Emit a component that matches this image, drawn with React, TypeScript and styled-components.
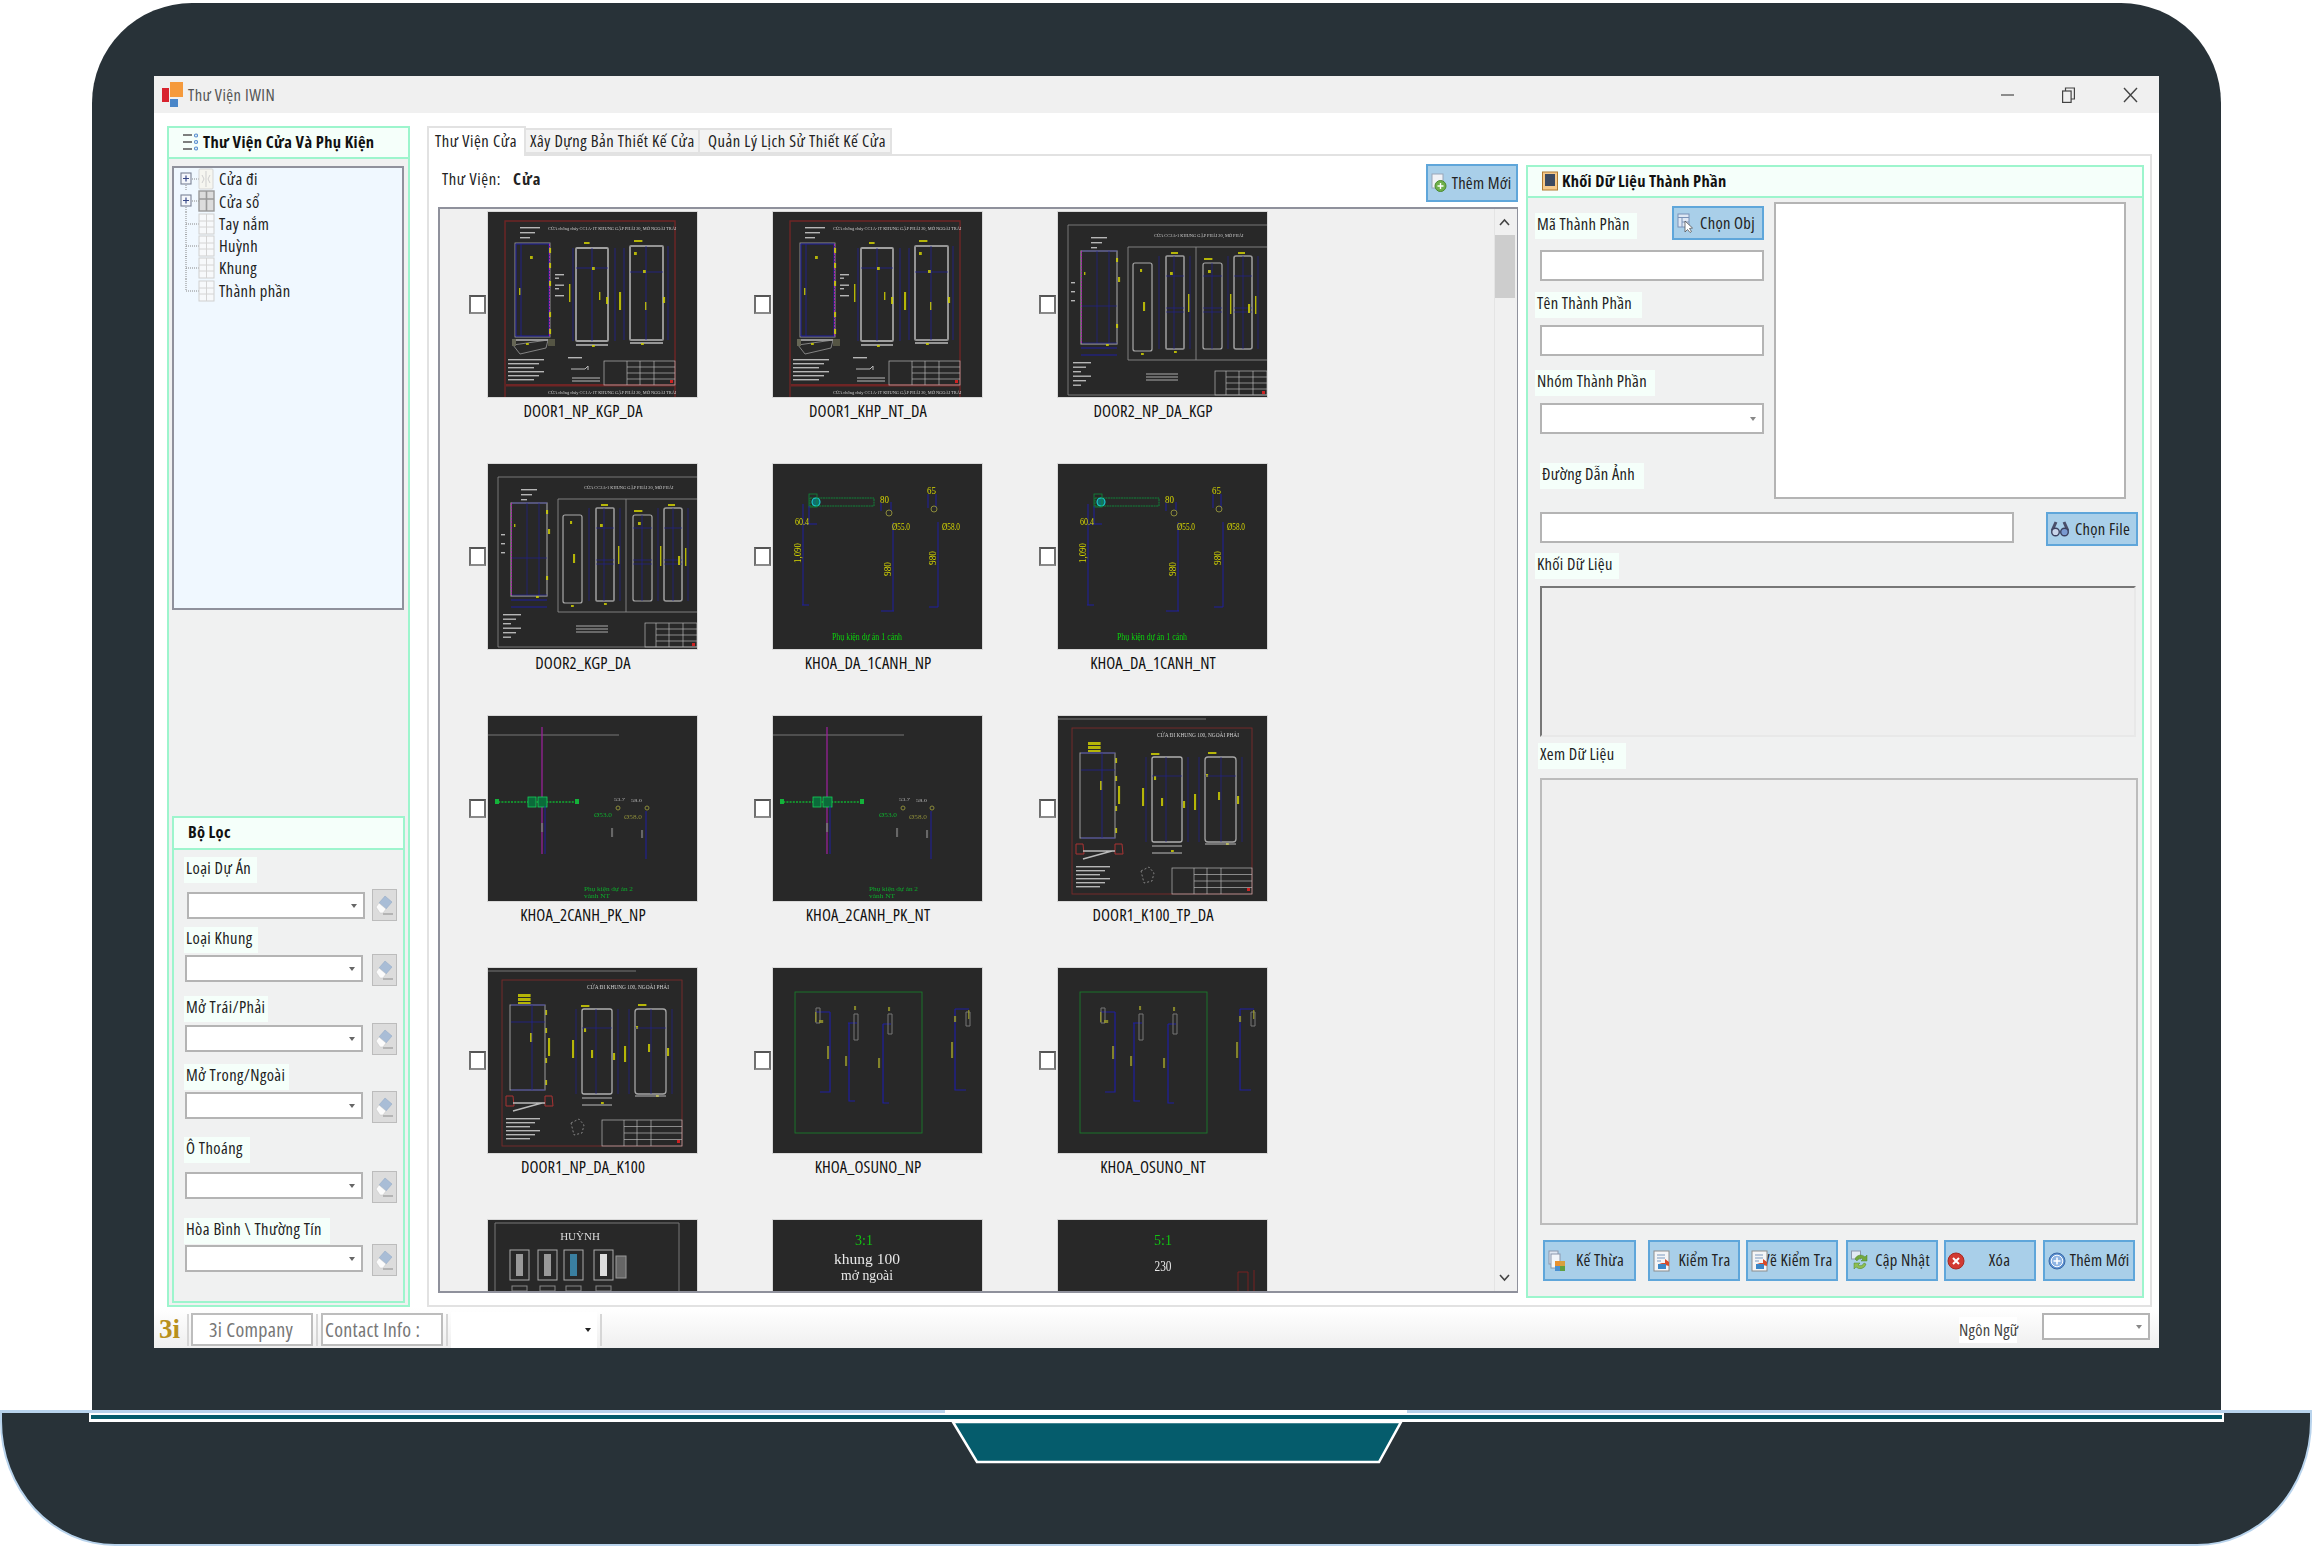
import React from "react";
import styled, { createGlobalStyle } from "styled-components";

const Global = createGlobalStyle`
  html, body { margin: 0; padding: 0; background: #fff; }
  body { font-family: "Open Sans", "Noto Sans", "Liberation Sans", sans-serif; color: #222; }
  * { box-sizing: border-box; }
  svg { flex: none; }
`;

const Page = styled.div`
  width: 2312px;
  height: 1547px;
  padding-top: 3px;
  overflow: hidden;
  background: #fff;
`;
const Lid = styled.div`
  margin-left: 92px;
  width: 2129px;
  height: 1407px;
  padding: 73px 62px 0;
  background: #283238;
  border-radius: 100px 100px 0 0;
`;
const Base = styled.div`
  position: relative;
  height: 136px;
  background: #283238;
  border: 2px solid #b8d3ec;
  border-top-width: 3px;
  border-radius: 0 0 115px 115px / 0 0 125px 125px;
  &::before {
    content: "";
    position: absolute;
    top: -3px;
    left: 943px;
    width: 462px;
    height: 3px;
    background: #fff;
  }
`;
const Strip = styled.div`
  margin-left: 87px;
  width: 2135px;
  height: 9px;
  background: #055c6c;
  border: 2px solid #fff;
  border-bottom-width: 3px;
`;
const Notch = styled.svg`
  display: block;
  margin-left: 949px;
`;

const Window = styled.div`
  width: 2005px;
  height: 1272px;
  display: flex;
  flex-direction: column;
  background: #fff;
`;
const TitleBar = styled.div`
  height: 37px;
  flex: none;
  display: flex;
  align-items: center;
  padding-left: 8px;
  background: #f0f0f0;
`;
const AppIcon = styled.svg`
  flex: none;
  margin-right: 5px;
`;
const WinButtons = styled.div`
  margin-left: auto;
  display: flex;
  align-items: center;
  gap: 48px;
  padding-right: 21px;
`;
const T = styled.span<{ $s?: number; $l?: number; $c?: string; $w?: number }>`
  display: inline-block;
  white-space: nowrap;
  font-size: ${(p) => p.$s ?? 16.5}px;
  font-weight: ${(p) => p.$w ?? 400};
  color: ${(p) => p.$c ?? "#222"};
  line-height: 1.2;
  font-stretch: 75%;
  letter-spacing: ${(p) => p.$l ?? 0}px;
`;
const Main = styled.div`
  flex: none;
  height: 1195px;
  display: flex;
  padding: 13px 0 0 13px;
  gap: 17px;
`;

/* left column */
const LeftPanel = styled.div`
  width: 243px;
  height: 1181px;
  display: flex;
  flex-direction: column;
  background: #f0f1f1;
  border: 2px solid #9df5cd;
`;
const PanelHead = styled.div<{ $h?: number; $pl?: number; $gap?: number }>`
  flex: none;
  height: ${(p) => p.$h ?? 31}px;
  display: flex;
  align-items: center;
  gap: ${(p) => p.$gap ?? 5}px;
  padding-left: ${(p) => p.$pl ?? 14}px;
  padding-bottom: 2px;
  background: #f5fffa;
  border-bottom: 2px solid #9df5cd;
`;
const TreeBox = styled.div`
  flex: none;
  margin: 7px 4px 0 3px;
  width: 232px;
  height: 444px;
  padding: 0 0 0 6px;
  background: #f0f8ff;
  border: 2px solid #8f919c;
`;
const TreeRow = styled.div`
  height: 22.3px;
  display: flex;
  align-items: center;
  gap: 1px;
`;
const FilterPanel = styled.div`
  margin: auto 3px 2px 3px;
  width: 233px;
  height: 487px;
  display: flex;
  flex-direction: column;
  background: #f0f1f1;
  border: 2px solid #9df5cd;
`;
const FilterBody = styled.div`
  padding: 7px 0 0 10px;
`;
const FieldLabel = styled.div<{ $w: number; $mt?: number; $ml?: number; $bg?: string }>`
  width: ${(p) => p.$w}px;
  height: 26px;
  margin-top: ${(p) => p.$mt ?? 0}px;
  margin-left: ${(p) => p.$ml ?? 0}px;
  padding: 0 0 5px 2px;
  display: flex;
  align-items: center;
  background: ${(p) => p.$bg ?? "#f5fffa"};
`;
const FilterRow = styled.div<{ $mt: number; $pl: number; $gap: number }>`
  margin-top: ${(p) => p.$mt}px;
  padding-left: ${(p) => p.$pl}px;
  display: flex;
  align-items: flex-start;
  gap: ${(p) => p.$gap}px;
`;
const Field = styled.div<{ $w: number; $h: number; $mt?: number; $ml?: number }>`
  flex: none;
  position: relative;
  width: ${(p) => p.$w}px;
  height: ${(p) => p.$h}px;
  margin-top: ${(p) => p.$mt ?? 0}px;
  margin-left: ${(p) => p.$ml ?? 0}px;
  background: #fff;
  border: 2px solid #b4b4b4;
`;
const Arrow = styled.i<{ $c?: string }>`
  position: absolute;
  right: 6px;
  top: 50%;
  margin-top: -2px;
  border-left: 3.5px solid transparent;
  border-right: 3.5px solid transparent;
  border-top: 4px solid ${(p) => p.$c ?? "#666"};
`;
const ClearBtn = styled.div`
  flex: none;
  width: 25px;
  height: 32px;
  display: flex;
  align-items: center;
  justify-content: center;
  background: #dcdcdc;
  border: 1px solid #bcbcbc;
`;

/* center pane */
const Pane = styled.div`
  width: 1725px;
  height: 1181px;
  display: flex;
  flex-direction: column;
`;
const TabStrip = styled.div`
  flex: none;
  height: 28px;
  display: flex;
  align-items: flex-end;
`;
const Tab = styled.div<{ $w: number; $on?: boolean; $pl?: number }>`
  width: ${(p) => p.$w}px;
  height: ${(p) => (p.$on ? 30 : 26)}px;
  margin-bottom: ${(p) => (p.$on ? -2 : 0)}px;
  display: flex;
  align-items: center;
  padding-left: ${(p) => p.$pl ?? 4}px;
  padding-bottom: ${(p) => (p.$on ? 3 : 0)}px;
  background: ${(p) => (p.$on ? "#fff" : "#f3f3f3")};
  border: 2px solid #e2e2e2;
  border-bottom: ${(p) => (p.$on ? "none" : "2px solid #e2e2e2")};
  border-left-width: ${(p) => (p.$on ? 2 : 0)}px;
  position: relative;
  z-index: ${(p) => (p.$on ? 1 : 0)};
`;
const PaneBody = styled.div`
  flex: 1;
  display: flex;
  gap: 8px;
  padding: 8px 0 0 9px;
  border: 2px solid #e2e2e2;
  background: #fff;
`;
const LibCol = styled.div`
  flex: none;
  width: 1080px;
  display: flex;
  flex-direction: column;
`;
const LibBar = styled.div`
  height: 38px;
  flex: none;
  display: flex;
  align-items: center;
  padding-left: 4px;
`;
const LibName = styled.div<{ $w: number }>`
  flex: none;
  width: ${(p) => p.$w}px;
  margin-bottom: 8px;
`;
const Blue = styled.div<{ $w: number; $h: number; $ml?: number; $pl?: number }>`
  flex: none;
  width: ${(p) => p.$w}px;
  height: ${(p) => p.$h}px;
  margin-left: ${(p) => (p.$ml === undefined ? 0 : p.$ml)}px;
  padding-left: ${(p) => p.$pl ?? 3}px;
  display: flex;
  align-items: center;
  overflow: hidden;
  background: #a9cfe9;
  border: 2px solid #5fa6da;
`;
const BtnIcon = styled.svg`
  flex: none;
  position: relative;
  z-index: 1;
`;
const BtnText = styled.div<{ $shift?: number }>`
  flex: 1;
  min-width: 0;
  display: flex;
  justify-content: center;
  margin-left: ${(p) => p.$shift ?? 0}px;
  padding-bottom: 1px;
`;
const TopAdd = styled(Blue)`
  margin-left: auto;
`;
const Gallery = styled.div`
  margin-top: 5px;
  height: 1086px;
  display: flex;
  background: #f0f0f0;
  border: 2px solid #8f919c;
  border-right-width: 1px;
  overflow: hidden;
`;
const GalleryGrid = styled.div`
  flex: 1;
  display: grid;
  grid-template-columns: repeat(3, 285px);
  grid-auto-rows: 252px;
  padding: 3px 0 0 29px;
  overflow: hidden;
`;
const Cell = styled.div`
  display: grid;
  grid-template-columns: 17px 209px;
  grid-template-rows: 185px auto;
  column-gap: 2px;
  align-content: start;
`;
const Check = styled.div`
  align-self: center;
  width: 17px;
  height: 19px;
  background: #fff;
  border: 2px solid #6f6f6f;
  border-top-color: #555;
  border-bottom-color: #8a8a8a;
`;
const Thumb = styled.svg`
  display: block;
  width: 209px;
  height: 185px;
  background: #282828;
  outline: 1px solid #d8d8d8;
  filter: blur(0.35px);
`;
const Caption = styled.div`
  grid-column: 2;
  width: 190px;
  height: 28px;
  display: flex;
  justify-content: center;
  align-items: center;
`;
const Scroll = styled.div`
  flex: none;
  width: 23px;
  display: flex;
  flex-direction: column;
  align-items: flex-start;
  border-left: 1px solid #e4e4e4;
  background: #f0f0f0;
`;
const ScrollBtn = styled.svg`
  flex: none;
  margin: 9px 0 9px 4px;
`;
const ScrollThumb = styled.div`
  flex: none;
  width: 20px;
  height: 63px;
  background: #cdcdcd;
`;
const ScrollFill = styled.div`
  flex: 1;
`;

/* right panel */
const RightPanel = styled.div`
  flex: none;
  width: 618px;
  height: 1133px;
  margin-top: 1px;
  display: flex;
  flex-direction: column;
  background: #f0f1f1;
  border: 2px solid #9df5cd;
`;
const RightBody = styled.div`
  padding: 4px 0 0 7px;
`;
const TopArea = styled.div`
  display: flex;
  gap: 10px;
  align-items: flex-start;
`;
const FormCol = styled.div`
  flex: none;
  width: 229px;
  padding-top: 4px;
`;
const LabelRow = styled.div`
  display: flex;
  align-items: center;
  justify-content: space-between;
`;
const ImageBox = styled.div`
  flex: none;
  width: 352px;
  height: 297px;
  background: #fff;
  border: 2px solid #b4b4b4;
`;
const PathRow = styled.div`
  margin: 13px 0 0 5px;
  display: flex;
  align-items: flex-start;
  gap: 32px;
`;
const Sunken = styled.div<{ $w: number; $h: number; $mt: number; $deep?: boolean }>`
  width: ${(p) => p.$w}px;
  height: ${(p) => p.$h}px;
  margin: ${(p) => p.$mt}px 0 0 5px;
  background: #efefef;
  border: 2px solid ${(p) => (p.$deep ? "#e8e8e8" : "#bcbcbc")};
  border-top-color: ${(p) => (p.$deep ? "#777" : "#bcbcbc")};
  border-left-color: ${(p) => (p.$deep ? "#777" : "#bcbcbc")};
`;
const ActionRow = styled.div`
  margin-top: 15px;
  display: flex;
`;

/* status bar */
const Status = styled.div`
  flex: 1;
  display: flex;
  align-items: center;
  padding: 3px 0 0 5px;
  background: linear-gradient(#fff, #efefef);
`;
const Logo3i = styled.span`
  font-family: "Liberation Serif", serif;
  font-size: 27px;
  font-weight: 700;
  color: #b8901c;
  width: 23px;
  line-height: 1;
`;
const Sep = styled.div<{ $mx?: string }>`
  flex: none;
  width: 2px;
  height: 32px;
  margin: ${(p) => p.$mx ?? "0 3px"};
  background: #d6d6d6;
`;
const StatusBox = styled.div<{ $pl: number }>`
  flex: none;
  width: 122px;
  height: 33px;
  display: flex;
  align-items: center;
  padding-left: ${(p) => p.$pl}px;
  background: #fff;
  border: 2px solid #bdbdbd;
`;
const StatusCombo = styled.div`
  flex: none;
  position: relative;
  width: 146px;
  height: 36px;
  background: #fff;
`;
const LangLabel = styled.div`
  margin-left: auto;
  width: 58px;
  height: 26px;
  display: flex;
  align-items: center;
  background: #fff;
`;
const LangCombo = styled(Field)`
  margin: -6px 9px 0 25px;
`;

/* ---------- drawings ---------- */
const Y = "#d8d800";
const BL = "#1f1fa0";
const GR = "#9a9a9a";
type R = [number, number, number, number];
const Marks = ({ list, c = Y }: { list: R[]; c?: string }) => (
  <>
    {list.map((r, i) => (
      <rect key={i} x={r[0]} y={r[1]} width={r[2] * 0.7} height={r[3]} fill={c} opacity={0.8} />
    ))}
  </>
);
const Lines = ({ x, y, n, w, step = 4, c = "#cfcfcf" }: { x: number; y: number; n: number; w: number; step?: number; c?: string }) => (
  <>
    {Array.from({ length: n }).map((_, i) => (
      <rect key={i} x={x} y={y + i * step} width={w - (i % 3) * 5} height={1.4} fill={c} opacity={0.85} />
    ))}
  </>
);
const SmallText = ({ x, y, w, children, s = 5.4, c = "#cfcfcf", a }: { x: number; y: number; w?: number; children: string; s?: number; c?: string; a?: "middle" }) => (
  <text x={x} y={y} fontSize={s} fill={c} fontFamily="Liberation Serif, serif" textLength={w} lengthAdjust={w ? "spacingAndGlyphs" : undefined} textAnchor={a}>
    {children}
  </text>
);
const TableBox = ({ x, y, w, h, split }: { x: number; y: number; w: number; h: number; split: number }) => (
  <g stroke="#b5b5b5" strokeWidth="0.7" fill="none">
    <rect x={x} y={y} width={w} height={h} />
    <path d={`M${x + split} ${y}V${y + h}M${x + split + 13} ${y}V${y + h}M${x + split + 27} ${y}V${y + h}M${x + split} ${y + h * 0.25}H${x + w}M${x + split} ${y + h * 0.5}H${x + w}M${x + split} ${y + h * 0.75}H${x + w}`} />
  </g>
);
const Door1 = () => (
  <>
    <path d="M17 185V9H187V185" fill="none" stroke="#6f2525" strokeWidth="1.4" />
    <rect x="18" y="172" width="169" height="2.5" fill="#6f2525" />
    <SmallText x={60} y={18} s={4.4}>CỬA chống cháy CC1A-1T KHUNG GẬP PHẢI 20, MỞ NGOÀI TRÁI</SmallText>
    <SmallText x={60} y={182} s={4.4}>CỬA chống cháy CC1A-1T KHUNG GẬP PHẢI 20, MỞ NGOÀI TRÁI</SmallText>
    <Lines x={32} y={15} n={3} w={20} step={5} />
    <rect x="27" y="31" width="35" height="94" fill="none" stroke={GR} strokeWidth="0.9" />
    <rect x="28" y="32" width="33" height="92" fill="none" stroke={BL} strokeWidth="1" />
    <path d="M61.5 32V124" stroke="#b020b0" strokeWidth="1" strokeDasharray="2 1" />
    <path d="M33 32V124" stroke={BL} strokeWidth="0.8" />
    <rect x="88" y="36" width="32" height="93" fill="none" stroke="#a0a0a0" strokeWidth="1.8" rx="1" />
    <path d="M88 56H120M104 36V129M85 36V129M127 36V129" stroke={BL} strokeWidth="0.7" />
    <rect x="142" y="34" width="33" height="94" fill="none" stroke="#949494" strokeWidth="2" rx="1" />
    <path d="M142 60H175M158 34V128M180 34V128M136 36V128" stroke={BL} strokeWidth="0.7" />
    <path d="M88 133H120M142 131H175M27 128H66" stroke="#bbb" strokeWidth="1.3" />
    <path d="M25 133L60 128L58 136L32 142Z" fill="none" stroke="#999" strokeWidth="0.8" />
    <rect x="60" y="127" width="7" height="7" fill="#554" />
    <rect x="24" y="127" width="4" height="7" fill="#665" />
    <Marks list={[[61, 36, 3, 5], [61, 51, 3, 5], [61, 69, 3, 5], [61, 100, 3, 5], [61, 117, 3, 5], [31, 76, 2, 7], [42, 44, 4, 3], [81, 72, 2, 18], [118, 85, 3, 7], [104, 55, 4, 3], [111, 80, 2, 8], [131, 80, 3, 18], [146, 40, 4, 3], [155, 58, 4, 3], [157, 90, 2, 8], [175, 85, 3, 6], [96, 30, 8, 2], [146, 28, 12, 2], [38, 131, 4, 2], [104, 133, 4, 2], [153, 131, 4, 2]]} />
    <Lines x={20} y={147} n={6} w={36} step={4} />
    <Lines x={67} y={62} n={7} w={9} step={3.5} />
    <Lines x={80} y={145} n={1} w={14} />
    <path d="M83 157h14l3 -3v4M84 166h28M84 169h28" stroke="#bbb" strokeWidth="1" fill="none" />
    <TableBox x={116} y={149} w={71} h={24} split={23} />
    <rect x="182" y="168" width="3" height="3" fill="#c22" />
  </>
);
const Door2 = () => (
  <>
    <path d="M209 13H10V183H209" fill="none" stroke="#8a8a8a" strokeWidth="0.8" />
    <SmallText x={96} y={25} s={4.4}>CỬA CC2A-1 KHUNG GẬP PHẢI 20, MỞ PHẢI</SmallText>
    <Lines x={33} y={25} n={3} w={16} step={5} />
    <rect x="23" y="39" width="36" height="93" fill="none" stroke={GR} strokeWidth="1.2" />
    <path d="M24 39H59M24 131H59M39 39V131M24 94H59M51 39V131" stroke={BL} strokeWidth="0.6" />
    <path d="M23.5 39V132" stroke="#b020b0" strokeDasharray="2 1" strokeWidth="0.9" />
    <path d="M23 136H59M23 143H59" stroke={BL} strokeWidth="1" />
    <path d="M70 35H209M70 35V148H209M138 35V148" stroke="#888" strokeWidth="0.9" fill="none" />
    <rect x="75" y="51" width="19" height="88" rx="2" fill="none" stroke="#aaa" strokeWidth="1.2" />
    <rect x="108" y="44" width="18" height="93" rx="1" fill="none" stroke="#9a9a9a" strokeWidth="1.6" />
    <rect x="145" y="51" width="19" height="86" rx="2" fill="none" stroke="#aaa" strokeWidth="1.2" />
    <rect x="176" y="44" width="18" height="93" rx="2" fill="none" stroke="#9a9a9a" strokeWidth="1.6" />
    <path d="M108 64H126M108 96H126M108 100H126M145 64H164M145 96H164M145 100H164M176 64H194M176 96H194M176 100H194M116 44V137M154 51V137M185 44V137M101 44V137M132 44V137M170 44V137M200 44V137" stroke={BL} strokeWidth="0.6" />
    <Marks list={[[58, 46, 3, 4], [60, 65, 3, 5], [58, 112, 3, 4], [26, 60, 2, 3], [85, 90, 3, 9], [82, 57, 3, 3], [112, 60, 4, 3], [130, 82, 2, 18], [150, 58, 4, 3], [172, 82, 2, 20], [190, 92, 3, 9], [197, 84, 2, 18], [48, 132, 4, 2], [83, 141, 4, 2], [116, 139, 4, 2], [113, 40, 10, 2], [146, 46, 12, 2], [180, 40, 10, 2]]} />
    <Lines x={15} y={150} n={6} w={18} step={4.5} />
    <path d="M88 162h32M88 165h32M88 168h32" stroke="#aaa" strokeWidth="1" />
    <Lines x={13} y={70} n={8} w={4} step={3} />
    <TableBox x={157} y={159} w={52} h={24} split={11} />
    <rect x="204" y="179" width="3" height="3" fill="#c22" />
  </>
);
const Khoa1 = () => (
  <>
    <rect x="37" y="34" width="64" height="8" fill="none" stroke="#0e8c3a" strokeWidth="0.9" strokeDasharray="2 0.6" />
    <circle cx="43" cy="38" r="4" fill="#0f6f6f" stroke="#19d6d6" strokeWidth="1.1" />
    <rect x="36" y="30" width="8" height="13" fill="none" stroke="#0e8c3a" strokeWidth="0.8" />
    <path d="M30 40V141M29 141H36M120 58V147M108 147H121M165 58V143M156 143H165M36 42V60M31 60H44M108 38V47M118 38V47M155 30V44M163 30V44" stroke={BL} strokeWidth="1" fill="none" />
    <circle cx="116" cy="49" r="3" fill="none" stroke="#8a8a3a" />
    <circle cx="161" cy="45" r="3" fill="none" stroke="#8a8a3a" />
    <SmallText x={22} y={61} s={11} c={Y} w={14}>60.4</SmallText>
    <SmallText x={107} y={39} s={11} c={Y} w={9}>80</SmallText>
    <SmallText x={154} y={30} s={11} c={Y} w={9}>65</SmallText>
    <SmallText x={119} y={66} s={11} c={Y} w={18}>Ø55.0</SmallText>
    <SmallText x={169} y={66} s={11} c={Y} w={18}>Ø58.0</SmallText>
    <g transform="translate(28 99) rotate(-90)"><SmallText x={0} y={0} s={10} c={Y} w={20}>1,090</SmallText></g>
    <g transform="translate(118 112) rotate(-90)"><SmallText x={0} y={0} s={10} c={Y} w={14}>980</SmallText></g>
    <g transform="translate(163 101) rotate(-90)"><SmallText x={0} y={0} s={10} c={Y} w={14}>980</SmallText></g>
    <SmallText x={59} y={176} s={11} c="#0bd40b" w={70}>Phụ kiện dự án 1 cánh</SmallText>
  </>
);
const Khoa2 = () => (
  <>
    <path d="M0 19H131" stroke="#777" strokeWidth="1.2" />
    <path d="M54 11V138" stroke="#a020a0" strokeWidth="1.2" />
    <path d="M7 86H90" stroke="#0fae2f" strokeWidth="1.3" strokeDasharray="2 1.2" />
    <rect x="40" y="81" width="8" height="10" fill="#0b6b3a" stroke="#14d25a" strokeWidth="0.8" />
    <rect x="50" y="81" width="9" height="10" fill="#0b6b3a" stroke="#14d25a" strokeWidth="0.8" />
    <rect x="7" y="83" width="4" height="5" fill="#14b23a" />
    <rect x="87" y="83" width="4" height="5" fill="#14b23a" />
    <path d="M57 90V138M158 95V143" stroke={BL} strokeWidth="1" />
    <circle cx="130" cy="92" r="2" fill="none" stroke="#8a8a3a" />
    <circle cx="159" cy="92" r="2" fill="none" stroke="#8a8a3a" />
    <SmallText x={126} y={85} s={5} c="#bbb" w={11}>53.7</SmallText>
    <SmallText x={143} y={86} s={5} c="#bbb" w={11}>58.0</SmallText>
    <SmallText x={106} y={101} s={5.5} c="#0fae2f" w={18}>Ø53.0</SmallText>
    <SmallText x={136} y={103} s={5.5} c="#8a8a3a" w={18}>Ø58.0</SmallText>
    <Marks c="#777" list={[[123, 112, 3, 9], [153, 114, 3, 8], [53, 107, 3, 9]]} />
    <SmallText x={96} y={175} s={6} c="#0bae2b" w={49}>Phụ kiện dự án 2</SmallText>
    <SmallText x={96} y={182} s={6} c="#0bae2b" w={26}>vành NT</SmallText>
  </>
);
const DoorK100 = () => (
  <>
    <path d="M0 3H148" stroke="#777" strokeWidth="1" />
    <rect x="14" y="12" width="180" height="166" fill="none" stroke="#7a2a2a" strokeWidth="0.9" />
    <SmallText x={99} y={21} s={6} w={82}>CỬA ĐI KHUNG 100, NGOÀI PHẢI</SmallText>
    <Marks list={[[30, 26, 18, 3], [30, 30, 18, 3], [30, 34, 18, 2], [93, 37, 12, 2], [150, 36, 12, 2], [57, 42, 3, 5], [57, 60, 3, 5], [57, 90, 3, 5], [57, 112, 3, 5], [42, 65, 3, 9], [60, 70, 3, 18], [84, 72, 3, 18], [96, 60, 3, 4], [103, 82, 3, 8], [125, 85, 3, 7], [136, 78, 3, 16], [148, 58, 3, 3], [160, 76, 3, 8], [179, 80, 3, 8], [113, 134, 4, 2], [168, 127, 4, 2]]} />
    <rect x="22" y="37" width="35" height="85" fill="none" stroke={GR} />
    <path d="M23 37H57M23 54H57M44 37V122M23 122H57" stroke={BL} strokeWidth="0.7" />
    <rect x="94" y="41" width="30" height="85" rx="2" fill="none" stroke="#b0b0b0" strokeWidth="1.3" />
    <rect x="147" y="41" width="31" height="85" rx="3" fill="none" stroke="#a5a5a5" strokeWidth="1.3" />
    <path d="M94 60H124M108 41V126M147 60H178M163 41V126M88 41V126M130 41V126M141 41V126M184 41V126" stroke={BL} strokeWidth="0.6" />
    <path d="M94 130H124M147 128H178M94 137H124" stroke="#bbb" strokeWidth="1" />
    <path d="M18 128h7l1 10h-8z" fill="none" stroke="#a33" strokeWidth="1" />
    <path d="M57 128h7l1 10h-8z" fill="none" stroke="#a33" strokeWidth="1" />
    <path d="M25 135H57M25 143L54 135" stroke="#bbb" strokeWidth="1.4" />
    <Lines x={18} y={150} n={6} w={34} step={4} />
    <path d="M83 155l8-4 5 6-2 8-8 2z" stroke="#999" fill="none" strokeDasharray="2 2" strokeWidth="0.8" />
    <TableBox x={114} y={152} w={80} h={26} split={22} />
    <rect x="189" y="172" width="3" height="3" fill="#c22" />
  </>
);
const Osuno = () => (
  <>
    <rect x="22" y="24" width="127" height="141" fill="none" stroke="#1a7a2a" strokeWidth="0.9" />
    <path d="M57 44V124H47M43 44H57M76 55V133H82M75 55H84M110 56V135H116M110 56H118M182 41V122H193M182 41H196" stroke={BL} strokeWidth="1.2" fill="none" />
    <path d="M43 40h4v15h-4zM81 46h4v26h-4zM115 46h4v20h-4zM193 44h4v14h-4z" fill="none" stroke="#777" strokeWidth="1" />
    <Marks c="#9a9a2a" list={[[42, 44, 2, 10], [46, 52, 6, 3], [81, 38, 3, 4], [115, 39, 3, 4], [54, 78, 3, 13], [72, 88, 3, 10], [105, 90, 3, 10], [178, 74, 3, 16], [195, 42, 2, 9], [181, 48, 3, 6]]} />
  </>
);
const Huynh = () => (
  <>
    <path d="M7 71V3H191V71" fill="none" stroke="#777" />
    <SmallText x={92} y={20} s={11} c="#ddd" a="middle">HUỲNH</SmallText>
    {[22, 50, 76, 106].map((x, i) => (
      <g key={x}>
        <rect x={x} y={30} width={19} height={30} fill="none" stroke="#aaa" />
        <rect x={x + 6} y={34} width={7} height={22} fill={i === 3 ? "#ddd" : i === 2 ? "#3a7fa0" : "#999"} />
        <rect x={x + 2} y={66} width={15} height={5} fill="none" stroke="#888" />
      </g>
    ))}
    <rect x="128" y="36" width="10" height="22" fill="#666" stroke="#999" />
  </>
);
const Ratio = ({ t, a, b, x }: { t: string; a: string; b?: string; x: number }) => (
  <>
    <SmallText x={x} y={25} s={14} c="#11c511" a="middle">{t}</SmallText>
    <SmallText x={b ? 94 : 105} y={b ? 44 : 51} s={b ? 15 : 14} c="#e8e8e8" a="middle" w={b ? 66 : 17}>{a}</SmallText>
    {b && <SmallText x={94} y={60} s={15} c="#e8e8e8" a="middle" w={52}>{b}</SmallText>}
    {!b && <path d="M180 71V52H190V71M196 50V71" stroke="#8a2020" fill="none" strokeWidth="0.8" />}
  </>
);

type Item = { caption?: string; art: React.ReactNode };
const items: Item[] = [
  { caption: "DOOR1_NP_KGP_DA", art: <Door1 /> },
  { caption: "DOOR1_KHP_NT_DA", art: <Door1 /> },
  { caption: "DOOR2_NP_DA_KGP", art: <Door2 /> },
  { caption: "DOOR2_KGP_DA", art: <Door2 /> },
  { caption: "KHOA_DA_1CANH_NP", art: <Khoa1 /> },
  { caption: "KHOA_DA_1CANH_NT", art: <Khoa1 /> },
  { caption: "KHOA_2CANH_PK_NP", art: <Khoa2 /> },
  { caption: "KHOA_2CANH_PK_NT", art: <Khoa2 /> },
  { caption: "DOOR1_K100_TP_DA", art: <DoorK100 /> },
  { caption: "DOOR1_NP_DA_K100", art: <DoorK100 /> },
  { caption: "KHOA_OSUNO_NP", art: <Osuno /> },
  { caption: "KHOA_OSUNO_NT", art: <Osuno /> },
  { art: <Huynh /> },
  { art: <Ratio t="3:1" a="khung 100" b="mở ngoài" x={91} /> },
  { art: <Ratio t="5:1" a="230" x={105} /> },
];

/* ---------- icons ---------- */
const Eraser = () => (
  <svg width="19" height="22" viewBox="0 0 19 22">
    <path d="M10 2L17 8L11 15L4 9Z" fill="#a9bdd6" stroke="#8ea6c4" strokeWidth="0.5" />
    <path d="M4 9L11 15L8 19H5L1 13Z" fill="#fbfbfb" stroke="#c4c4c4" strokeWidth="0.5" />
    <path d="M8 20H18" stroke="#9a9a9a" strokeWidth="1.2" />
  </svg>
);
const TreeExp = ({ plus, last, kind }: { plus?: boolean; last?: boolean; kind: "door" | "win" | "grid" }) => (
  <svg width="38" height="22" viewBox="0 0 38 22" style={{ overflow: "visible" }}>
    <path d={`M6 ${plus ? 17 : -1}V${last ? 11 : 23}M${plus ? 12 : 6} 11H19`} stroke="#888" strokeWidth="1" strokeDasharray="1 1" fill="none" />
    {plus && (
      <>
        <rect x="1" y="5" width="10" height="11" fill="#f4f7fb" stroke="#7a8296" strokeWidth="1.1" />
        <path d="M3 10.5H9M6 7.5V13.5" stroke="#3a4a88" strokeWidth="1.2" />
      </>
    )}
    {kind === "door" && (
      <>
        <rect x="19" y="1" width="14" height="20" rx="1" fill="#f6f6f0" stroke="#d5d5d5" />
        <path d="M26 3V19M22 7L24 11L22 15M30 7L28 11L30 15" stroke="#cfcfcf" fill="none" />
      </>
    )}
    {kind === "win" && (
      <>
        <rect x="19" y="1" width="15" height="20" fill="#dcdcdc" stroke="#999" strokeWidth="1.4" />
        <path d="M26.5 1V21M19 9H34" stroke="#999" strokeWidth="1.6" />
      </>
    )}
    {kind === "grid" && (
      <>
        <rect x="19" y="1" width="15" height="20" fill="#f7f9fb" stroke="#cfcfcf" />
        <path d="M26.5 1V21M19 8H34M19 14H34" stroke="#d4d4d4" />
      </>
    )}
  </svg>
);
const HeadMenu = () => (
  <svg width="15" height="18" viewBox="0 0 15 18">
    <path d="M0 2H9M0 9H9M0 16H9" stroke="#555" strokeWidth="1.3" />
    <g fill="none" stroke="#5a8fd0" strokeWidth="1.2"><circle cx="13" cy="2.5" r="1.5" /><circle cx="13" cy="9" r="1.5" /><circle cx="13" cy="15.5" r="1.5" /></g>
  </svg>
);
const DocPlus = () => (
  <BtnIcon width="16" height="20" viewBox="0 0 16 20">
    <rect x="1" y="1" width="11" height="14" fill="#f0f2f6" stroke="#9aa6b8" />
    <circle cx="9.5" cy="13" r="5.5" fill="#6fb04a" stroke="#4a8a30" />
    <path d="M6.5 13H12.5M9.5 10V16" stroke="#fff" strokeWidth="1.4" />
  </BtnIcon>
);
const ObjIcon = () => (
  <BtnIcon width="16" height="20" viewBox="0 0 16 20">
    <rect x="1" y="1" width="11" height="13" fill="#dfe8f5" stroke="#7a92b8" />
    <path d="M1 4.5H12M5 4.5V14M5 9H12" stroke="#7a92b8" />
    <path d="M8 8L8 19L10.5 16.5L13 19.5L14.5 18.5L12.5 15.5L15.5 15Z" fill="#fff" stroke="#555" strokeWidth="0.8" />
  </BtnIcon>
);
const Binoc = () => (
  <BtnIcon width="18" height="18" viewBox="0 0 18 18">
    <path d="M5 2L1 11M13 2L17 11" stroke="#4a4f6a" strokeWidth="3" />
    <circle cx="4.5" cy="12" r="3.8" fill="#c8d5ea" stroke="#3c4260" strokeWidth="1.4" />
    <circle cx="13.5" cy="12" r="3.8" fill="#7a9ad0" stroke="#3c4260" strokeWidth="1.4" />
  </BtnIcon>
);
const Inherit = () => (
  <BtnIcon width="18" height="22" viewBox="0 0 18 22">
    <rect x="1" y="1" width="9" height="13" fill="#dfe6f2" stroke="#8b97ad" />
    <rect x="3" y="4" width="9" height="14" fill="#f2f5fa" stroke="#8b97ad" />
    <rect x="7" y="11" width="5" height="5" fill="#e89030" />
    <rect x="12" y="11" width="5" height="5" fill="#d8a040" />
    <rect x="7" y="16" width="5" height="5" fill="#4a90d0" />
    <rect x="12" y="16" width="5" height="5" fill="#60a040" />
  </BtnIcon>
);
const CheckDoc = () => (
  <BtnIcon width="18" height="22" viewBox="0 0 18 22">
    <rect x="1" y="1" width="15" height="20" fill="#f4f5f7" stroke="#8d8d8d" />
    <path d="M4 5H12M4 8H12M4 11H8" stroke="#7a9ac0" strokeWidth="1.2" />
    <path d="M6 13H12V9L16 12V16L12 15Z" fill="#d84b2a" />
    <rect x="5" y="14" width="8" height="5" fill="#3a86c8" />
  </BtnIcon>
);
const Sync = () => (
  <BtnIcon width="18" height="22" viewBox="0 0 18 22">
    <rect x="0.5" y="1" width="9" height="8" fill="#e3e9f4" stroke="#8b97ad" />
    <path d="M4 9A6 6 0 0 1 14 7L16 5V11H10L12 9A4 4 0 0 0 6 11Z" fill="#72a83e" stroke="#4f8428" strokeWidth="0.5" />
    <path d="M15 14A6 6 0 0 1 5 17L3 19V13H9L7 15A4 4 0 0 0 13 13Z" fill="#8fbe52" stroke="#4f8428" strokeWidth="0.5" />
  </BtnIcon>
);
const Del = () => (
  <BtnIcon width="18" height="20" viewBox="0 0 18 20">
    <circle cx="9" cy="10" r="8" fill="#d23a32" stroke="#a82a22" />
    <path d="M6 7L12 13M12 7L6 13" stroke="#fff" strokeWidth="2" />
  </BtnIcon>
);
const AddCircle = () => (
  <BtnIcon width="18" height="20" viewBox="0 0 18 20">
    <circle cx="9" cy="10" r="8" fill="#5b8fd0" stroke="#3c6aa8" />
    <circle cx="9" cy="10" r="5.8" fill="#8fb5e4" stroke="#fff" strokeWidth="1" />
    <path d="M5.5 10H12.5M9 6.5V13.5" stroke="#fff" strokeWidth="1.6" />
  </BtnIcon>
);

const filters = [
  { l: "Loại Dự Án", w: 73, lt: 0, rt: 6, pl: 3, gap: 7, top: 3 },
  { l: "Loại Khung", w: 74, lt: 6, rt: 1, pl: 1, gap: 9, top: 1 },
  { l: "Mở Trái/Phải", w: 84, lt: 10, rt: 1, pl: 1, gap: 9, top: 2 },
  { l: "Mở Trong/Ngoài", w: 105, lt: 9, rt: 1, pl: 1, gap: 9, top: 1 },
  { l: "Ô Thoáng", w: 66, lt: 14, rt: 8, pl: 1, gap: 9, top: 1 },
  { l: "Hòa Bình \\ Thường Tín", w: 146, lt: 15, rt: 0, pl: 1, gap: 9, top: 1 },
];
const tree: { t: string; plus?: boolean; kind: "door" | "win" | "grid"; last?: boolean }[] = [
  { t: "Cửa đi", plus: true, kind: "door" },
  { t: "Cửa sổ", plus: true, kind: "win" },
  { t: "Tay nắm", kind: "grid" },
  { t: "Huỳnh", kind: "grid" },
  { t: "Khung", kind: "grid" },
  { t: "Thành phần", kind: "grid", last: true },
];
const actions = [
  { t: "Kế Thừa", ml: 3, i: <Inherit /> },
  { t: "Kiểm Tra", ml: 12, i: <CheckDoc /> },
  { t: "Vẽ Kiểm Tra", ml: 6, i: <CheckDoc />, shift: -10 },
  { t: "Cập Nhật", ml: 8, i: <Sync /> },
  { t: "Xóa", ml: 6, i: <Del /> },
  { t: "Thêm Mới", ml: 7, i: <AddCircle /> },
];

export default function App() {
  return (
    <Page>
      <Global />
      <Lid>
        <Window>
          <TitleBar>
            <AppIcon width="21" height="25" viewBox="0 0 21 25">
              <rect x="8" y="0" width="13" height="15" fill="#f59a3c" />
              <rect x="0" y="6" width="7" height="14" fill="#d8232f" />
              <rect x="8" y="17" width="8" height="8" fill="#4a86c8" />
            </AppIcon>
            <T $l={0.45} $c="#555">Thư Viện IWIN</T>
            <WinButtons>
              <svg width="13" height="16" viewBox="0 0 13 16"><path d="M0 8H13" stroke="#555" strokeWidth="1.3" /></svg>
              <svg width="13" height="16" viewBox="0 0 13 16" fill="none" stroke="#444" strokeWidth="1.2"><rect x="0.6" y="4" width="8.5" height="11.4" /><path d="M3.5 4V1H12.4V12H9" /></svg>
              <svg width="15" height="16" viewBox="0 0 15 16"><path d="M1 1L14 15M14 1L1 15" stroke="#444" strokeWidth="1.4" /></svg>
            </WinButtons>
          </TitleBar>
          <Main>
            <LeftPanel>
              <PanelHead>
                <HeadMenu />
                <T $w={700} $l={0.36} $c="#111">Thư Viện Cửa Và Phụ Kiện</T>
              </PanelHead>
              <TreeBox>
                {tree.map((n) => (
                  <TreeRow key={n.t}>
                    <TreeExp plus={n.plus} kind={n.kind} last={n.last} />
                    <T $l={0.4}>{n.t}</T>
                  </TreeRow>
                ))}
              </TreeBox>
              <FilterPanel>
                <PanelHead $pl={14} $h={32}>
                  <T $w={700} $l={0.3} $c="#111">Bộ Lọc</T>
                </PanelHead>
                <FilterBody>
                  {filters.map((f) => (
                    <React.Fragment key={f.l}>
                      <FieldLabel $w={f.w} $mt={f.lt}><T $l={0.4}>{f.l}</T></FieldLabel>
                      <FilterRow $mt={f.rt} $pl={f.pl} $gap={f.gap}>
                        <Field $w={178} $h={27} $mt={f.top}><Arrow /></Field>
                        <ClearBtn><Eraser /></ClearBtn>
                      </FilterRow>
                    </React.Fragment>
                  ))}
                </FilterBody>
              </FilterPanel>
            </LeftPanel>
            <Pane>
              <TabStrip>
                <Tab $w={99} $on $pl={6}><T $l={0.55}>Thư Viện Cửa</T></Tab>
                <Tab $w={174}><T $l={0.52}>Xây Dựng Bản Thiết Kế Cửa</T></Tab>
                <Tab $w={192} $pl={8}><T $l={0.52}>Quản Lý Lịch Sử Thiết Kế Cửa</T></Tab>
              </TabStrip>
              <PaneBody>
                <LibCol>
                  <LibBar>
                    <LibName $w={71}><T $l={0.6}>Thư Viện:</T></LibName>
                    <LibName $w={60}><T $w={700} $l={1}>Cửa</T></LibName>
                    <TopAdd $w={92} $h={38}>
                      <DocPlus />
                      <BtnText><T $l={0.3}>Thêm Mới</T></BtnText>
                    </TopAdd>
                  </LibBar>
                  <Gallery>
                    <GalleryGrid>
                      {items.map((it, i) => (
                        <Cell key={i}>
                          <Check />
                          <Thumb viewBox="0 0 209 185">{it.art}</Thumb>
                          {it.caption && (
                            <Caption><T $l={0.08} $c="#111">{it.caption}</T></Caption>
                          )}
                        </Cell>
                      ))}
                    </GalleryGrid>
                    <Scroll>
                      <ScrollBtn width="11" height="8" viewBox="0 0 11 8"><path d="M1 7L5.5 2L10 7" fill="none" stroke="#444" strokeWidth="1.6" /></ScrollBtn>
                      <ScrollThumb />
                      <ScrollFill />
                      <ScrollBtn width="11" height="8" viewBox="0 0 11 8"><path d="M1 1L5.5 6L10 1" fill="none" stroke="#444" strokeWidth="1.6" /></ScrollBtn>
                    </Scroll>
                  </Gallery>
                </LibCol>
                <RightPanel>
                  <PanelHead $h={31} $gap={4}>
                    <svg width="16" height="22" viewBox="0 0 16 22"><rect x="0.5" y="2" width="15" height="18" fill="#f5c98a" stroke="#b07a30" /><rect x="3" y="4" width="10" height="12" fill="#3c4a60" /></svg>
                    <T $w={700} $l={0.28} $c="#111">Khối Dữ Liệu Thành Phần</T>
                  </PanelHead>
                  <RightBody>
                    <TopArea>
                      <FormCol>
                        <LabelRow>
                          <FieldLabel $w={102} $mt={6}><T $l={0.3}>Mã Thành Phần</T></FieldLabel>
                          <Blue $w={92} $h={34}>
                            <ObjIcon />
                            <BtnText><T $l={0.3}>Chọn Obj</T></BtnText>
                          </Blue>
                        </LabelRow>
                        <Field $w={224} $h={31} $mt={10} $ml={5} />
                        <FieldLabel $w={107} $mt={11}><T $l={0.3}>Tên Thành Phần</T></FieldLabel>
                        <Field $w={224} $h={31} $mt={7} $ml={5} />
                        <FieldLabel $w={120} $mt={14}><T $l={0.3}>Nhóm Thành Phần</T></FieldLabel>
                        <Field $w={224} $h={31} $mt={7} $ml={5}><Arrow $c="#888" /></Field>
                        <FieldLabel $w={104} $mt={29} $ml={5}><T $l={0.3}>Đường Dẫn Ảnh</T></FieldLabel>
                      </FormCol>
                      <ImageBox />
                    </TopArea>
                    <PathRow>
                      <Field $w={474} $h={31} />
                      <Blue $w={92} $h={34}>
                        <Binoc />
                        <BtnText><T $l={0.3}>Chọn File</T></BtnText>
                      </Blue>
                    </PathRow>
                    <FieldLabel $w={84} $mt={7}><T $l={0.3}>Khối Dữ Liệu</T></FieldLabel>
                    <Sunken $w={596} $h={151} $mt={7} $deep />
                    <FieldLabel $w={88} $mt={6} $ml={3}><T $l={0.3}>Xem Dữ Liệu</T></FieldLabel>
                    <Sunken $w={598} $h={447} $mt={9} />
                    <ActionRow>
                      {actions.map((a, idx) => (
                        <Blue key={a.t} $w={idx === 0 ? 93 : 92} $h={41} $ml={idx === 0 ? 8 : a.ml} $pl={idx === 4 ? 1 : 3}>
                          {a.i}
                          <BtnText $shift={a.shift}><T $l={0.3}>{a.t}</T></BtnText>
                        </Blue>
                      ))}
                    </ActionRow>
                  </RightBody>
                </RightPanel>
              </PaneBody>
            </Pane>
          </Main>
          <Status>
            <Logo3i>3i</Logo3i>
            <Sep $mx="0 2px 0 5px" />
            <StatusBox $pl={16}><T $s={20} $l={0.3} $c="#777">3i Company</T></StatusBox>
            <Sep />
            <StatusBox $pl={2}><T $s={20} $l={0.3} $c="#777">Contact Info :</T></StatusBox>
            <Sep />
            <StatusCombo><Arrow $c="#222" /></StatusCombo>
            <Sep />
            <LangLabel><T $l={0.25} $c="#444">Ngôn Ngữ</T></LangLabel>
            <LangCombo $w={108} $h={27}><Arrow $c="#888" /></LangCombo>
          </Status>
        </Window>
      </Lid>
      <Base>
        <Strip />
        <Notch width="452" height="42" viewBox="0 0 452 42">
          <path d="M2 0L26 40H428L450 0Z" fill="#055c6c" stroke="#fff" strokeWidth="2.5" />
        </Notch>
      </Base>
    </Page>
  );
}
